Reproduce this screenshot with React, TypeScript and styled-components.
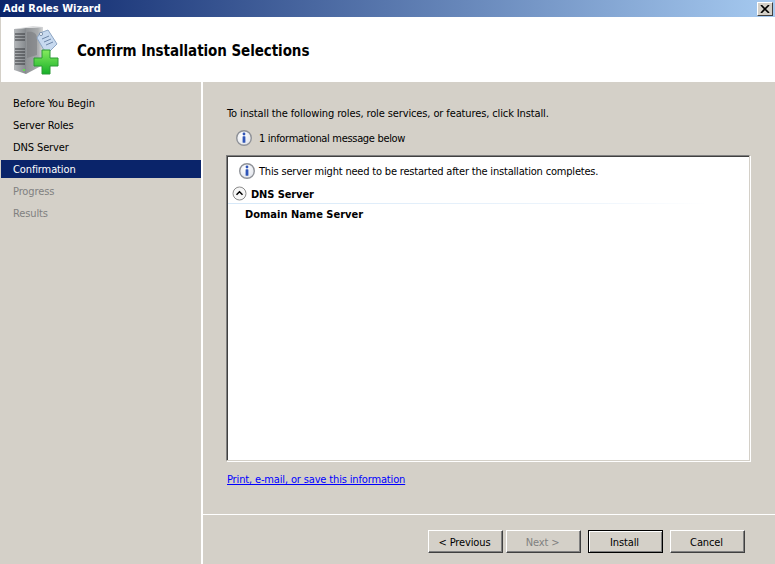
import React from "react";
import styled, { createGlobalStyle } from "styled-components";

const GlobalStyle = createGlobalStyle`
  html, body {
    margin: 0;
    padding: 0;
    background: #d4d0c8;
  }
  body {
    font-family: "DejaVu Sans Condensed", "Liberation Sans", sans-serif;
    font-size: 11px;
    letter-spacing: -0.12px;
    color: #000;
  }
`;

const Window = styled.div`
  width: 775px;
  height: 564px;
  display: flex;
  flex-direction: column;
  overflow: hidden;
  background: #d4d0c8;
`;

const TitleBar = styled.div`
  height: 17px;
  flex: none;
  display: flex;
  align-items: center;
  justify-content: space-between;
  padding: 0 2px 0 3px;
  background: linear-gradient(to right, #0a246a, #a6caf0);
`;

const TitleText = styled.div`
  font-size: 11px;
  font-weight: 700;
  letter-spacing: 0;
  color: #fff;
  line-height: 16px;
`;

const CloseButton = styled.div`
  width: 16px;
  height: 14px;
  box-sizing: border-box;
  display: flex;
  align-items: center;
  justify-content: center;
  background: #d4d0c8;
  border: 1px solid;
  border-color: #fff #404040 #404040 #fff;
`;

const Header = styled.div`
  height: 65px;
  flex: none;
  display: flex;
  align-items: center;
  gap: 18px;
  padding-left: 12px;
  margin-left: 1px;
  background: #fff;
`;

const PageTitle = styled.div`
  font-size: 15px;
  font-weight: 700;
  letter-spacing: -0.07px;
  padding-top: 2px;
  color: #000;
`;

const Body = styled.div`
  flex: 1;
  display: flex;
  min-height: 0;
`;

const Sidebar = styled.div`
  width: 200px;
  margin-left: 1px;
  flex: none;
  display: flex;
  flex-direction: column;
  gap: 4px;
  padding-top: 12px;
  box-sizing: border-box;
`;

const Step = styled.div<{ $active?: boolean; $disabled?: boolean }>`
  height: 18px;
  line-height: 20px;
  padding-left: 12px;
  background: ${({ $active }) => ($active ? "#0a246a" : "transparent")};
  color: ${({ $active, $disabled }) =>
    $active ? "#fff" : $disabled ? "#808080" : "#000"};
`;

const Main = styled.div`
  flex: 1;
  display: flex;
  flex-direction: column;
  border-left: 2px solid #fff;
`;

const Content = styled.div`
  flex: 1;
  display: flex;
  flex-direction: column;
  padding: 23px 25px 0 23px;
`;

const Intro = styled.div`
  height: 16px;
  line-height: 18px;
  margin-left: 1px;
`;

const InfoRow = styled.div`
  display: flex;
  align-items: center;
  gap: 6px;
  height: 18px;
  margin-left: 9px;
  margin-top: 8px;
  letter-spacing: -0.32px;
`;

const ListBox = styled.div`
  height: 306px;
  margin-top: 8px;
  box-sizing: border-box;
  background: #fff;
  border-style: solid;
  border-width: 1px;
  border-color: #808080 #d4d0c8 #d4d0c8 #808080;
  box-shadow: 1px 1px 0 #fff, inset 1px 1px 0 #404040;
  padding: 6px 0 0 1px;
`;

const Notice = styled.div`
  display: flex;
  align-items: center;
  gap: 3px;
  height: 18px;
  padding-left: 10px;
  letter-spacing: -0.19px;
`;

const SectionHead = styled.div`
  display: flex;
  align-items: center;
  gap: 4px;
  height: 20px;
  margin-top: 4px;
  padding-left: 4px;
  font-weight: 700;
  letter-spacing: -0.1px;
  background-image: linear-gradient(to right, #d6e8f8, #eef5fc 70%, #fff 92%);
  background-size: 100% 1px;
  background-position: bottom;
  background-repeat: no-repeat;
`;

const RoleName = styled.div`
  margin: 2px 0 0 17px;
  height: 18px;
  line-height: 18px;
  font-weight: 700;
  letter-spacing: 0;
`;

const SaveLink = styled.a`
  margin: 11px 0 0 1px;
  line-height: 16px;
  color: #0000ff;
  text-decoration: underline;
  align-self: flex-start;
  letter-spacing: -0.15px;
`;

const Footer = styled.div`
  height: 50px;
  box-sizing: border-box;
  flex: none;
  display: flex;
  justify-content: flex-end;
  align-items: flex-start;
  padding: 15px 30px 0 0;
  border-top: 1px solid #fff;
`;

const Button = styled.div<{ $gap?: number; $isDefault?: boolean; $disabled?: boolean }>`
  width: 75px;
  height: 23px;
  box-sizing: border-box;
  margin-left: ${({ $gap }) => $gap ?? 7}px;
  padding: 2px 2px 0 0;
  display: flex;
  align-items: center;
  justify-content: center;
  background: #d4d0c8;
  color: ${({ $disabled }) => ($disabled ? "#808080" : "#000")};
  border: 1px solid;
  border-color: ${({ $isDefault }) =>
    $isDefault ? "#000" : "#fff #404040 #404040 #fff"};
  box-shadow: ${({ $isDefault }) =>
    $isDefault
      ? "inset 1px 1px 0 #fff, inset -1px -1px 0 #808080"
      : "inset -1px -1px 0 #808080"};
`;

const CollapseSvg = styled.svg`
  margin-top: -2px;
`;

const InfoIcon = () => (
  <svg width="18" height="18" viewBox="0 0 18 18">
    <defs>
      <radialGradient id="infoFill" cx="40%" cy="35%" r="70%">
        <stop offset="0%" stopColor="#ffffff" />
        <stop offset="100%" stopColor="#e2e5ec" />
      </radialGradient>
    </defs>
    <circle cx="9" cy="9" r="7.3" fill="url(#infoFill)" stroke="#8f9298" strokeWidth="1.4" />
    <circle cx="9" cy="5" r="1.4" fill="#2f55b8" />
    <rect x="7.6" y="7.2" width="2.8" height="6.6" rx="0.6" fill="#2f55b8" />
  </svg>
);

const CollapseIcon = () => (
  <CollapseSvg width="15" height="15" viewBox="0 0 15 15">
    <circle cx="7.5" cy="7.5" r="6.5" fill="#f6f6f6" stroke="#8c8c8c" />
    <path d="M4.5 8.7 L7.5 5.8 L10.5 8.7" fill="none" stroke="#000" strokeWidth="1.5" />
  </CollapseSvg>
);

const CloseGlyph = () => (
  <svg width="10" height="8" viewBox="0 0 10 8">
    <path d="M1 0 L9 8 M9 0 L1 8" stroke="#000" strokeWidth="1.6" />
  </svg>
);

const ServerIcon = () => (
  <svg width="46" height="50" viewBox="0 0 46 50">
    <defs>
      <linearGradient id="serverFront" x1="0" y1="0" x2="1" y2="0">
        <stop offset="0%" stopColor="#b4b7ba" />
        <stop offset="100%" stopColor="#85898d" />
      </linearGradient>
      <linearGradient id="serverSide" x1="0" y1="0" x2="1" y2="0">
        <stop offset="0%" stopColor="#8f9295" />
        <stop offset="70%" stopColor="#a9acae" />
        <stop offset="100%" stopColor="#d7d8d9" />
      </linearGradient>
      <linearGradient id="plusFill" x1="0" y1="0" x2="0" y2="1">
        <stop offset="0%" stopColor="#86ec5e" />
        <stop offset="100%" stopColor="#16b028" />
      </linearGradient>
    </defs>
    <path d="M1 4 L13 3 L13 49 L1 45 Z" fill="url(#serverFront)" />
    <path d="M13 3 L30 2 L30 40 L13 49 Z" fill="url(#serverSide)" />
    <path d="M1 4 L20 1 L30 2 L13 3 Z" fill="#dcdddf" />
    <path d="M14 7 C 20 6, 24 8, 24 14 L24 30 L14 33 Z" fill="#77797c" opacity="0.55" />
    <path d="M2 9 H12 M2 12 H12 M2 15 H12 M2 24 H12 M2 27 H12 M2 30 H12 M2 33 H12 M2 36 H12 M2 39 H12"
      stroke="#34373a" strokeWidth="1" />
    <rect x="10" y="44" width="2" height="2" fill="#5fe04a" />
    <path d="M27 8 L35 5 L44 19 L36 27 L31 25 L24 13 Z" fill="#c7d9ef" stroke="#8ea6c4" />
    <circle cx="28" cy="9" r="1.6" fill="#f4f7fb" stroke="#7f93ad" />
    <path d="M29 14 L36 11 M31 17 L38 14 M33 20 L40 17" stroke="#6d86a8" strokeWidth="1" />
    <path
      d="M29 25 H37 V33 H45 V41 H37 V49 H29 V41 H21 V33 H29 Z"
      fill="url(#plusFill)"
      stroke="#2a9a34"
    />
  </svg>
);

const steps = [
  { label: "Before You Begin" },
  { label: "Server Roles" },
  { label: "DNS Server" },
  { label: "Confirmation", active: true },
  { label: "Progress", disabled: true },
  { label: "Results", disabled: true },
];

export default function App() {
  return (
    <>
      <GlobalStyle />
      <Window>
        <TitleBar>
          <TitleText>Add Roles Wizard</TitleText>
          <CloseButton>
            <CloseGlyph />
          </CloseButton>
        </TitleBar>
        <Header>
          <ServerIcon />
          <PageTitle>Confirm Installation Selections</PageTitle>
        </Header>
        <Body>
          <Sidebar>
            {steps.map((step) => (
              <Step key={step.label} $active={step.active} $disabled={step.disabled}>
                {step.label}
              </Step>
            ))}
          </Sidebar>
          <Main>
            <Content>
              <Intro>To install the following roles, role services, or features, click Install.</Intro>
              <InfoRow>
                <InfoIcon />
                <span>1 informational message below</span>
              </InfoRow>
              <ListBox>
                <Notice>
                  <InfoIcon />
                  <span>This server might need to be restarted after the installation completes.</span>
                </Notice>
                <SectionHead>
                  <CollapseIcon />
                  <span>DNS Server</span>
                </SectionHead>
                <RoleName>Domain Name Server</RoleName>
              </ListBox>
              <SaveLink href="#">Print, e-mail, or save this information</SaveLink>
            </Content>
            <Footer>
              <Button>&lt; Previous</Button>
              <Button $gap={3} $disabled>Next &gt;</Button>
              <Button $isDefault>Install</Button>
              <Button>Cancel</Button>
            </Footer>
          </Main>
        </Body>
      </Window>
    </>
  );
}
